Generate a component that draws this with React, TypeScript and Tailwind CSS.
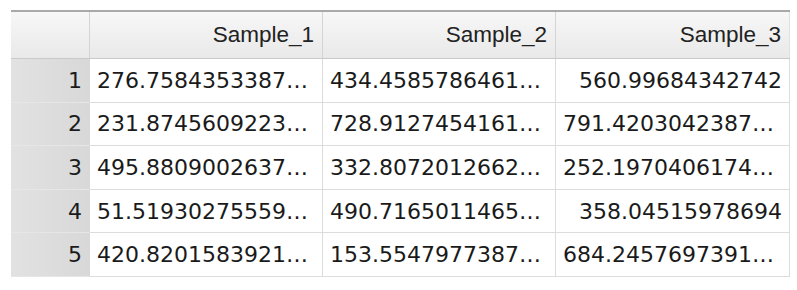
const columns = ['Sample_1', 'Sample_2', 'Sample_3']

const rows = [
  ['276.75843533871234', '434.45857864612345', '560.99684342742'],
  ['231.87456092231234', '728.91274541612345', '791.42030423871234'],
  ['495.88090026371234', '332.80720126621234', '252.19704061741234'],
  ['51.519302755591234', '490.71650114651234', '358.04515978694'],
  ['420.82015839211234', '153.55479773871234', '684.24576973911234'],
]

const cols = 'grid grid-cols-[79px_233px_233px_234px]'

export default function App() {
  return (
    <div className="w-[797px] h-[290px] bg-white pt-[10px] pl-[11px]">
      <div className="w-[779px] border-t-2 border-[#a9a9a9]">
        <div className={`${cols} h-[47px] border-b border-[#c9c9c9] bg-gradient-to-b from-[#f7f7f7] to-[#e9e9e9] font-['Liberation_Sans',Arial,sans-serif] text-[22.5px] text-[#222]`}>
          <div className="border-r border-[#d4d4d4]" />
          {columns.map((c, i) => (
            <div
              key={c}
              className={`flex items-center justify-end pr-2 ${i < 2 ? 'border-r border-[#d4d4d4]' : 'border-r border-[#e0e0e0]'}`}
            >
              {c}
            </div>
          ))}
        </div>
        {rows.map((r, i) => (
          <div
            key={i}
            className={`${cols} h-[43.6px] font-['DejaVu_Sans',Verdana,sans-serif] text-[22px] text-[#1a1a1a]`}
          >
            <div className="flex items-center justify-end pr-2 bg-gradient-to-r from-[#e2e2e2] to-[#d8d8d8] border-b border-[#e6e6e6]">
              {i + 1}
            </div>
            {r.map((v, j) => (
              <div
                key={j}
                className="flex items-center border-b border-r border-[#dcdcdc] px-[7px] min-w-0"
              >
                <span className="block w-full truncate text-right">{v}</span>
              </div>
            ))}
          </div>
        ))}
      </div>
    </div>
  )
}
